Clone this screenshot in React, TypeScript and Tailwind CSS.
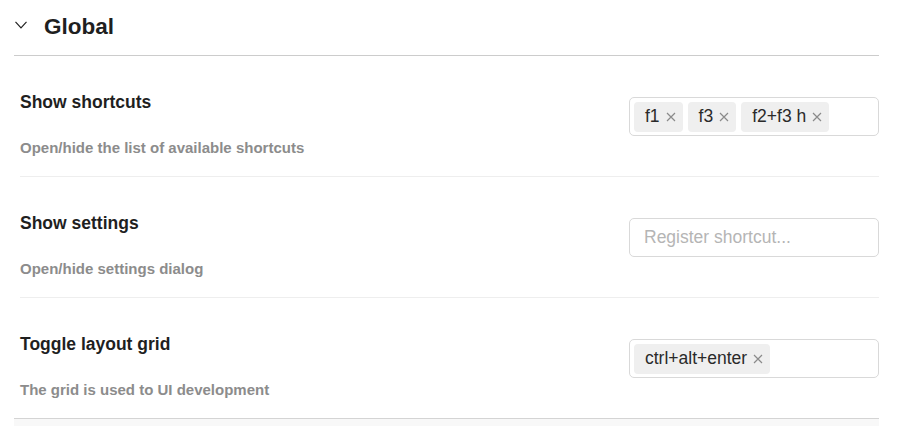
import React from "react";

type Shortcut = {
  title: string;
  description: string;
  keys: string[];
};

const shortcuts: Shortcut[] = [
  { title: "Show shortcuts", description: "Open/hide the list of available shortcuts", keys: ["f1", "f3", "f2+f3 h"] },
  { title: "Show settings", description: "Open/hide settings dialog", keys: [] },
  { title: "Toggle layout grid", description: "The grid is used to UI development", keys: ["ctrl+alt+enter"] },
];

function CloseIcon() {
  return (
    <svg width="10" height="10" viewBox="0 0 10 10" fill="none" stroke="#8a8a8a" strokeWidth="1.2">
      <path d="M1 1l8 8M9 1l-8 8" />
    </svg>
  );
}

function ShortcutInput({ keys }: { keys: string[] }) {
  return (
    <div className="flex items-center gap-[5px] w-[250px] h-[39px] px-[4px] border border-[#d9d9d9] rounded-[5px] bg-white">
      {keys.length === 0 ? (
        <span className="pl-[10px] text-[17.5px] text-[#b5b5b5]">Register shortcut...</span>
      ) : (
        keys.map((k) => (
          <span key={k} className="flex items-center gap-[6px] h-[30px] pl-[11px] pr-[7px] rounded-[4px] bg-[#efefef] text-[17.5px] text-[#2a2a2a]">
            {k}
            <CloseIcon />
          </span>
        ))
      )}
    </div>
  );
}

export default function App() {
  return (
    <div className="w-[899px] h-[426px] overflow-hidden bg-white pl-[14px] pr-[20px]" style={{ fontFamily: '"Liberation Sans", Arial, sans-serif' }}>
      {/* Section header */}
      <div className="flex items-center h-[56px] pb-[1px] border-b border-[#cccccc]">
        <svg className="ml-[1px] mr-[17px] -mt-[5px]" width="12" height="8" viewBox="0 0 12 8" fill="none" stroke="#222" strokeWidth="1.2">
          <path d="M0.5 0.8l5.5 6 5.5-6" />
        </svg>
        <h2 className="text-[22.5px] font-bold text-[#1f1f1f] leading-none">Global</h2>
      </div>

      <div className="pl-[6px]">
        {shortcuts.map((s, i) => (
          <div
            key={s.title}
            className={`flex justify-between h-[121px] pt-[34px] border-b ${i === shortcuts.length - 1 ? "border-transparent" : "border-[#eeeeee]"}`}
          >
            <div className="flex flex-col">
              <div className="text-[17.5px] leading-[24px] font-bold text-[#1f1f1f]">{s.title}</div>
              <div className="mt-[24px] text-[15px] leading-[20px] font-bold text-[#8c8c8c]">{s.description}</div>
            </div>
            <div className="mt-[7px]">
              <ShortcutInput keys={s.keys} />
            </div>
          </div>
        ))}
      </div>

      {/* next collapsed section */}
      <div className="-mt-[1px] h-[20px] border-t border-[#d4d4d4] bg-[#f8f8f8]" />
    </div>
  );
}
